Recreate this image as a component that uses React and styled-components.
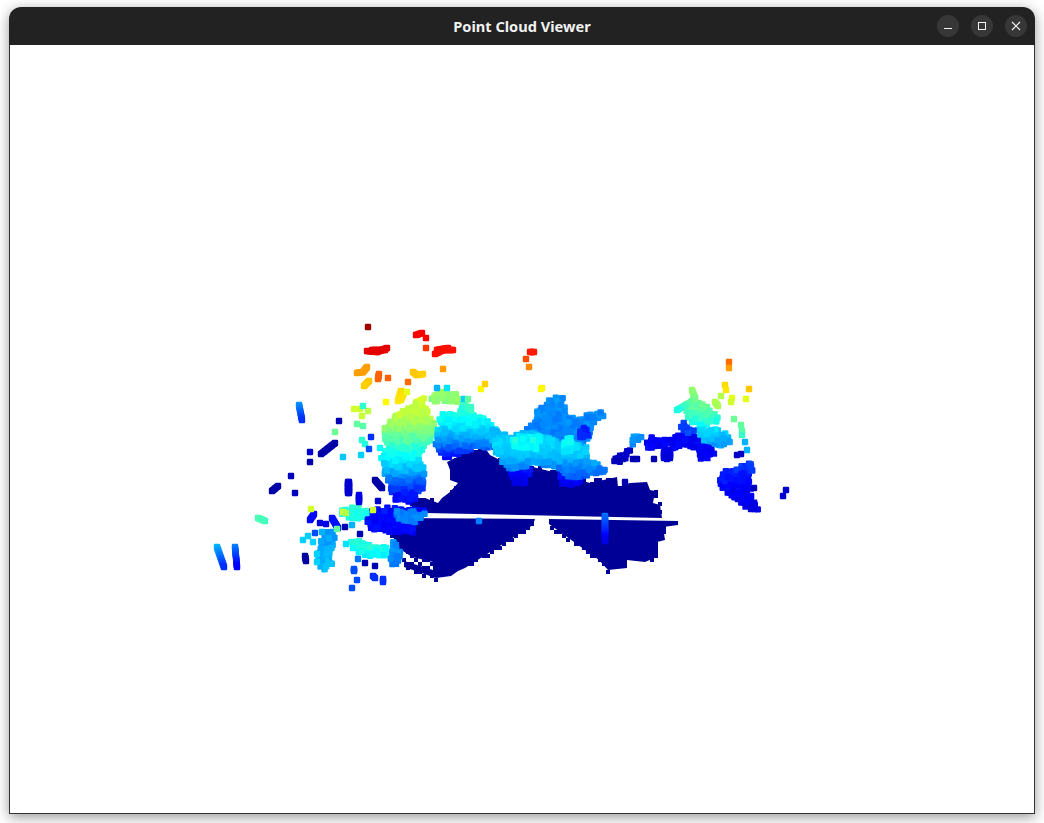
import React, { useMemo } from "react";
import styled, { createGlobalStyle } from "styled-components";

const GlobalStyle = createGlobalStyle`
    html, body {
        margin: 0;
        background: #fff;
        overflow: hidden;
    }
`;

const Desktop = styled.div`
    box-sizing: border-box;
    width: 1044px;
    height: 823px;
    padding: 7px 9px 9px;
    overflow: hidden;
`;

const Window = styled.div`
    border-radius: 12px 12px 0 0;
    box-shadow: 0 3px 13px rgba(0, 0, 0, 0.42);
    background: #fff;
`;

const TitleBar = styled.div`
    box-sizing: border-box;
    height: 38px;
    padding: 0 8px;
    display: grid;
    grid-template-columns: 1fr auto 1fr;
    align-items: center;
    background: #222222;
    border-radius: 12px 12px 0 0;
`;

const Title = styled.div`
    grid-column: 2;
    font-family: "Noto Sans", "Open Sans", sans-serif;
    font-size: 14.6px;
    font-weight: 700;
    color: #f2f2f2;
`;

const Controls = styled.div`
    grid-column: 3;
    justify-self: end;
    display: flex;
    gap: 12px;
`;

const ControlButton = styled.div`
    width: 22px;
    height: 22px;
    border-radius: 50%;
    background: #373737;
    display: flex;
    align-items: center;
    justify-content: center;
    color: #f2f2f2;
`;

const Viewport = styled.div`
    border: 1px solid #333333;
    border-top: none;
    background: #fff;
`;

const Cloud = styled.svg`
    display: block;
    width: 1024px;
    height: 768px;
`;

// jet colormap, same as the viewer uses for height
const jet = (t) => {
    const c = (v) => Math.round(255 * Math.max(0, Math.min(1, 1.5 - Math.abs(v))));
    return `rgb(${c(4 * t - 3)},${c(4 * t - 2)},${c(4 * t - 1)})`;
};

const GROUND = "#000096";

const groundShapes = [
    [[425, 498], [438, 503], [442, 498], [450, 492], [458, 483], [450, 480], [450, 470], [447, 462], [455, 458], [470, 452], [485, 448], [490, 455], [500, 460], [510, 473], [533, 467], [557, 473], [590, 483], [617, 477], [618, 487], [630, 483], [647, 482], [650, 490], [655, 491], [653, 503], [660, 505], [662, 518], [425, 513], [412, 512], [412, 498]],
    [[390, 518], [535, 519], [533, 525], [465, 568], [458, 571], [451, 576], [436, 578], [404, 567], [404, 561], [433, 570], [433, 562], [412, 557], [400, 549], [392, 535]],
    [[549, 519], [678, 521], [678, 525], [663, 527], [665, 540], [657, 542], [657, 557], [645, 562], [627, 560], [627, 568], [608, 570], [599, 560], [549, 524]],
];

// filled parts of the cloud: outline, then [y, jet value] stops
const regions = [
    // blue undersides
    { poly: [[508, 466], [532, 466], [526, 484], [512, 484]], stops: [[466, 0.15], [484, 0.1]] },
    { poly: [[558, 470], [585, 476], [576, 486], [561, 484]], stops: [[470, 0.16], [486, 0.1]] },
    // left column
    {
        poly: [[422, 394], [426, 399], [428, 415], [435, 425], [431, 440], [424, 450], [419, 456], [425, 470], [426, 480], [421, 494], [415, 502], [396, 503], [390, 492], [385, 478], [382, 468], [381, 455], [387, 445], [383, 432], [388, 422], [402, 411], [414, 405]],
        stops: [[395, 0.59], [420, 0.55], [435, 0.48], [450, 0.41], [465, 0.33], [475, 0.27], [485, 0.2], [495, 0.15], [505, 0.12]],
    },
    // arch and what hangs under it
    { poly: [[431, 398], [438, 392], [450, 391], [459, 394], [463, 400], [459, 402], [445, 401], [435, 404]], stops: [[390, 0.54], [404, 0.5]] },
    {
        poly: [[463, 401], [471, 405], [473, 415], [486, 419], [495, 426], [502, 440], [497, 449], [485, 448], [470, 450], [455, 455], [447, 459], [441, 453], [435, 448], [438, 425], [439, 412], [445, 414], [456, 413]],
        stops: [[400, 0.46], [415, 0.4], [430, 0.33], [445, 0.24], [455, 0.14], [462, 0.11]],
    },
    // centre blob
    {
        poly: [[535, 410], [546, 406], [549, 399], [561, 394], [564, 401], [568, 414], [577, 421], [586, 414], [605, 409], [604, 416], [594, 424], [588, 440], [583, 447], [541, 445], [527, 440], [527, 426], [535, 423]],
        stops: [[395, 0.27], [445, 0.25]],
    },
    { poly: [[580, 424], [590, 428], [587, 440], [580, 442]], stops: [[424, 0.14], [442, 0.17]] },
    {
        poly: [[492, 427], [500, 431], [510, 437], [520, 433], [535, 433], [560, 442], [588, 446], [588, 460], [606, 468], [604, 473], [585, 476], [570, 478], [555, 468], [535, 463], [515, 470], [506, 468], [497, 455], [492, 448]],
        stops: [[430, 0.3], [445, 0.34], [455, 0.32], [468, 0.25], [480, 0.2]],
    },
    { poly: [[512, 438], [520, 436], [540, 436], [540, 449], [514, 450]], stops: [[434, 0.36], [452, 0.39]] },
    { poly: [[564, 438], [572, 438], [574, 452], [564, 452]], stops: [[438, 0.38], [452, 0.36]] },
    // right arc
    { poly: [[644, 445], [652, 437], [665, 439], [680, 435], [697, 433], [705, 440], [713, 448], [715, 457], [701, 460], [698, 450], [685, 446], [672, 449], [660, 446], [646, 450]], stops: [[433, 0.12], [460, 0.12]] },
    { poly: [[612, 459], [625, 453], [629, 448], [632, 451], [627, 460], [614, 464]], stops: [[450, 0.08], [464, 0.06]] },
    { poly: [[630, 437], [640, 434], [642, 438], [632, 445]], stops: [[434, 0.27], [445, 0.25]] },
    // right cluster
    { poly: [[690, 400], [700, 401], [714, 412], [720, 420], [716, 424], [700, 428], [688, 420], [682, 408]], stops: [[400, 0.48], [415, 0.44], [428, 0.37]] },
    { poly: [[697, 430], [715, 427], [728, 435], [732, 444], [716, 446], [702, 440]], stops: [[428, 0.35], [446, 0.27]] },
    { poly: [[680, 420], [688, 425], [695, 432], [689, 436], [681, 430]], stops: [[420, 0.19], [436, 0.2]] },
    // right lower blob
    {
        poly: [[739, 466], [752, 460], [753, 470], [749, 474], [750, 482], [753, 497], [758, 503], [759, 511], [746, 508], [732, 499], [722, 491], [720, 480], [723, 471]],
        stops: [[460, 0.2], [475, 0.15], [490, 0.12], [510, 0.09]],
    },
    // blue mass under the column
    { poly: [[366, 512], [386, 507], [427, 510], [427, 516], [418, 519], [414, 533], [396, 534], [386, 531], [372, 529], [364, 520]], stops: [[505, 0.14], [535, 0.12]] },
    { poly: [[393, 511], [426, 511], [424, 516], [412, 524], [398, 520]], stops: [[510, 0.25], [525, 0.26]] },
    // bottom left
    { poly: [[334, 528], [336, 540], [331, 553], [332, 564], [327, 570], [320, 568], [318, 555], [320, 541], [326, 532]], stops: [[528, 0.27], [570, 0.31]] },
    { poly: [[338, 508], [360, 507], [368, 511], [363, 518], [350, 520], [342, 515]], stops: [[506, 0.44], [520, 0.38]] },
    { poly: [[348, 541], [363, 541], [377, 547], [387, 547], [386, 556], [371, 558], [356, 551]], stops: [[540, 0.43], [558, 0.36]] },
    { poly: [[392, 542], [397, 542], [402, 558], [399, 565], [392, 565], [390, 555]], stops: [[540, 0.27], [566, 0.25]] },
];

// [x, y, jet value] polylines
const strokes = [
    [[217, 547, 0.3], [224, 567, 0.17]],
    [[235, 547, 0.25], [237, 567, 0.12]],
    [[258, 518, 0.45], [265, 521, 0.44]],
    [[299, 405, 0.27], [302, 420, 0.17]],
    [[335, 443, 0.04], [321, 454, 0.04]],
    [[272, 491, 0.04], [278, 486, 0.04]],
    [[348, 482, 0.08], [348, 493, 0.08]],
    [[349, 482, 0.08], [349, 493, 0.08]],
    [[359, 495, 0.1], [359, 502, 0.1]],
    [[375, 480, 0.04], [382, 488, 0.04]],
    [[314, 514, 0.13], [310, 520, 0.13]],
    [[332, 518, 0.14], [338, 528, 0.14]],
    [[305, 556, 0.03], [306, 561, 0.03]],
    [[373, 576, 0.17], [375, 578, 0.17]],
    [[383, 579, 0.17], [383, 582, 0.17]],
    [[354, 569, 0.2], [354, 571, 0.2]],
    [[367, 351, 0.9], [377, 352, 0.9], [387, 348, 0.9]],
    [[372, 350, 0.9], [385, 350, 0.9]],
    [[435, 354, 0.86], [443, 350, 0.86], [453, 350, 0.86]],
    [[437, 350, 0.86], [448, 348, 0.86]],
    [[416, 335, 0.88], [422, 333, 0.88]],
    [[357, 373, 0.72], [363, 372, 0.72], [367, 367, 0.72]],
    [[379, 374, 0.78], [378, 379, 0.78]],
    [[369, 381, 0.68], [364, 386, 0.67]],
    [[413, 372, 0.68], [417, 375, 0.68], [423, 374, 0.67]],
    [[401, 391, 0.66], [398, 401, 0.65]],
    [[404, 392, 0.66], [401, 400, 0.65]],
    [[530, 352, 0.85], [534, 352, 0.85]],
    [[692, 390, 0.52], [695, 398, 0.5], [690, 403, 0.47], [677, 410, 0.4]],
    [[715, 402, 0.55], [718, 406, 0.54]],
    [[605, 516, 0.24], [605, 530, 0.17], [605, 541, 0.1]],
    [[667, 450, 0.1], [667, 459, 0.09]],
    [[664, 452, 0.1], [664, 458, 0.09]],
    [[670, 452, 0.1], [670, 458, 0.09]],
];

const dots = [
    [426, 338, 0.88], [426, 348, 0.82], [388, 378, 0.78], [408, 382, 0.77], [443, 369, 0.72],
    [481, 389, 0.63], [485, 384, 0.67], [407, 392, 0.6], [386, 402, 0.63], [354, 409, 0.58],
    [360, 409, 0.58], [368, 411, 0.56], [362, 416, 0.57], [363, 406, 0.42], [437, 388, 0.3],
    [447, 388, 0.35], [464, 399, 0.33], [468, 399, 0.47], [339, 421, 0.05], [335, 432, 0.48],
    [357, 424, 0.47], [363, 426, 0.46], [371, 437, 0.17], [362, 440, 0.42], [365, 444, 0.41],
    [369, 449, 0.2], [380, 448, 0.38], [343, 457, 0.32], [361, 455, 0.33], [310, 452, 0.08],
    [310, 462, 0.04], [291, 476, 0.06], [295, 493, 0.06], [378, 501, 0.08], [311, 509, 0.58],
    [320, 523, 0.1], [326, 524, 0.1], [345, 527, 0.05], [337, 529, 0.47], [373, 510, 0.58],
    [352, 525, 0.3], [303, 540, 0.33], [308, 536, 0.33], [313, 542, 0.33], [315, 533, 0.2],
    [322, 532, 0.3], [317, 554, 0.33], [317, 562, 0.33], [360, 534, 0.05], [346, 544, 0.35],
    [353, 548, 0.38], [358, 559, 0.24], [365, 563, 0.05], [375, 566, 0.05], [354, 570, 0.2],
    [357, 580, 0.2], [352, 588, 0.2], [479, 521, 0.25],
    [343, 512, 0.57], [346, 513, 0.55], [533, 440, 0.4], [515, 440, 0.41],
    [526, 359, 0.8], [529, 367, 0.74], [542, 388, 0.64], [541, 389, 0.63], [729, 362, 0.77],
    [729, 368, 0.72], [725, 385, 0.66], [726, 390, 0.65], [749, 389, 0.68], [721, 396, 0.55],
    [732, 398, 0.6], [731, 402, 0.58], [746, 399, 0.6], [734, 419, 0.48], [741, 425, 0.47],
    [742, 431, 0.46], [742, 435, 0.43], [745, 442, 0.3], [747, 450, 0.3], [737, 455, 0.07],
    [741, 454, 0.07], [754, 488, 0.06], [786, 490, 0.08], [783, 496, 0.08], [637, 459, 0.05],
    [633, 459, 0.05], [654, 459, 0.05], [625, 482, 0.05], [368, 327, 0.97],
];

const randomFrom = (seed) => () => {
    seed = (seed + 0x6d2b79f5) | 0;
    let t = Math.imul(seed ^ (seed >>> 15), 1 | seed);
    t = (t + Math.imul(t ^ (t >>> 7), 61 | t)) ^ t;
    return ((t ^ (t >>> 14)) >>> 0) / 4294967296;
};

const isInside = (poly, x, y) => {
    let inside = false;
    for (let i = 0, j = poly.length - 1; i < poly.length; j = i++) {
        const [xi, yi] = poly[i];
        const [xj, yj] = poly[j];
        if ((yi > y) !== (yj > y) && x < ((xj - xi) * (y - yi)) / (yj - yi) + xi) inside = !inside;
    }
    return inside;
};

const valueAt = (stops, y) => {
    if (y <= stops[0][0]) return stops[0][1];
    for (let i = 1; i < stops.length; i++) {
        if (y <= stops[i][0]) {
            const [y0, t0] = stops[i - 1];
            const [y1, t1] = stops[i];
            return t0 + ((t1 - t0) * (y - y0)) / (y1 - y0);
        }
    }
    return stops[stops.length - 1][1];
};

const buildRegionPoints = () => {
    const random = randomFrom(20);
    const points = [];
    regions.forEach(({ poly, stops }) => {
        const xs = poly.map((p) => p[0]);
        const ys = poly.map((p) => p[1]);
        const group = [];
        for (let y = Math.min(...ys); y <= Math.max(...ys); y += 3.5) {
            for (let x = Math.min(...xs); x <= Math.max(...xs); x += 3.5) {
                const px = x + random() * 2.4 - 1.2;
                const py = y + random() * 2.4 - 1.2;
                if (!isInside(poly, px, py)) continue;
                group.push({ x: px, y: py, t: valueAt(stops, py) + (random() - 0.5) * 0.035, order: random() });
            }
        }
        group.sort((a, b) => a.order - b.order);
        points.push(...group);
    });
    return points;
};

const buildStrokePoints = () => {
    const points = [];
    strokes.forEach((path) => {
        path.forEach((p, i) => {
            const q = path[i + 1];
            if (!q) return;
            const steps = Math.max(1, Math.ceil(Math.hypot(q[0] - p[0], q[1] - p[1]) / 1.5));
            for (let s = 0; s <= steps; s++) {
                const f = s / steps;
                points.push({
                    x: p[0] + (q[0] - p[0]) * f,
                    y: p[1] + (q[1] - p[1]) * f,
                    t: p[2] + (q[2] - p[2]) * f,
                });
            }
        });
    });
    return points;
};

// little teeth along the slanted ground edges, the points there sit on a grid
const buildGroundTeeth = () => {
    const teeth = [];
    groundShapes.forEach((shape) => {
        shape.forEach((p, i) => {
            const q = shape[(i + 1) % shape.length];
            const length = Math.hypot(q[0] - p[0], q[1] - p[1]);
            if (length < 12 || Math.abs(q[1] - p[1]) / length < 0.2) return;
            const steps = Math.floor(length / 5);
            for (let s = 0; s < steps; s++) {
                const x = p[0] + ((q[0] - p[0]) * s) / steps;
                const y = p[1] + ((q[1] - p[1]) * s) / steps;
                teeth.push({ x: Math.round(x / 4) * 4, y: Math.round(y / 4) * 4 });
            }
        });
    });
    return teeth;
};

const Point = ({ x, y, t }) => (
    <rect x={x - 3.2} y={y - 3.2} width="6.4" height="6.4" rx="1.2" fill={jet(t)} />
);

const PointCloud = () => {
    const teeth = useMemo(buildGroundTeeth, []);
    const points = useMemo(() => [
        ...buildRegionPoints(),
        ...buildStrokePoints(),
        ...dots.map(([x, y, t]) => ({ x, y, t })),
    ], []);

    return (
        <Cloud viewBox="10 45 1024 768">
            {groundShapes.map((shape, i) => (
                <polygon key={i} points={shape.map((p) => p.join(",")).join(" ")} fill={GROUND} />
            ))}
            {teeth.map((p, i) => (
                <rect key={i} x={p.x - 2} y={p.y - 2} width="4" height="4" fill={GROUND} />
            ))}
            {points.map((p, i) => <Point key={i} {...p} />)}
        </Cloud>
    );
};

const Icon = ({ children }) => (
    <svg width="10" height="10" viewBox="0 0 10 10" fill="none" stroke="currentColor" strokeWidth="1">
        {children}
    </svg>
);

const App = () => (
    <>
        <GlobalStyle />
        <Desktop>
            <Window>
                <TitleBar>
                    <Title>Point Cloud Viewer</Title>
                    <Controls>
                        <ControlButton>
                            <Icon><path d="M1 7.5h8" /></Icon>
                        </ControlButton>
                        <ControlButton>
                            <Icon><rect x="1.5" y="1.5" width="7" height="7" /></Icon>
                        </ControlButton>
                        <ControlButton>
                            <Icon><path d="M1 1l8 8M9 1l-8 8" strokeWidth="1.2" /></Icon>
                        </ControlButton>
                    </Controls>
                </TitleBar>
                <Viewport>
                    <PointCloud />
                </Viewport>
            </Window>
        </Desktop>
    </>
);

export default App;
